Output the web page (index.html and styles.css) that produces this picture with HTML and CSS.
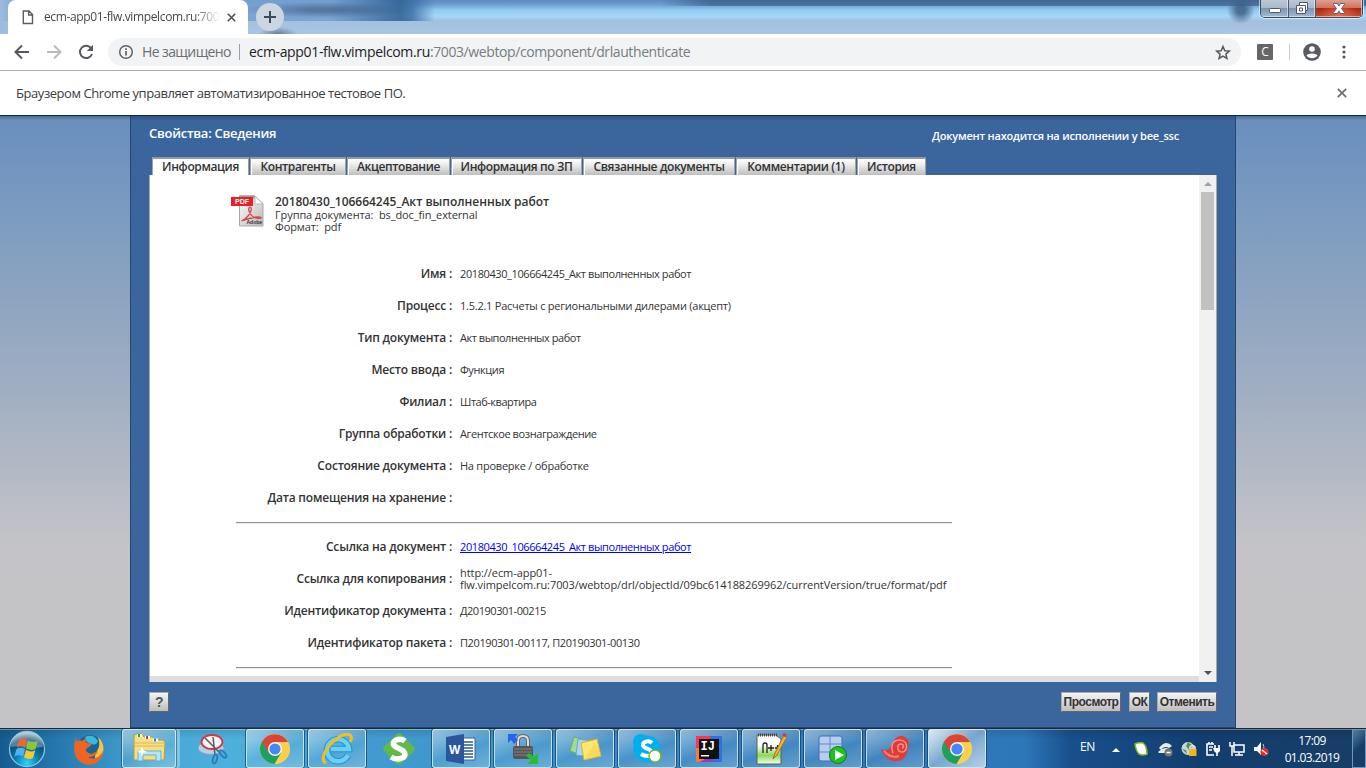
FILE: index.html
```html
<!DOCTYPE html>
<html lang="ru">
<head>
<meta charset="utf-8">
<title>Свойства: Сведения</title>
<link rel="stylesheet" href="styles.css">
</head>
<body>
<svg class="defs" width="0" height="0">
  <symbol id="chrome" viewBox="0 0 30 30">
    <circle cx="15" cy="15" r="15" fill="#fdd04c"/>
    <path d="M15 15 2 7.5A15 15 0 0 0 14.5 30L21 18.5z" fill="#1fa15d"/>
    <path d="M15 15 2 7.5A15 15 0 0 1 28 8H15z" fill="#db4437"/>
    <path d="M2 7.5 8.5 18.5 10 10z" fill="#db4437"/>
    <path d="M21.5 18.5 14.5 30 10 20z" fill="#1fa15d"/>
    <path d="M28 8.2H15L21.5 18.5 14.8 30A15 15 0 0 0 28 8.2z" fill="#fdd04c"/>
    <circle cx="15" cy="15" r="7" fill="#f6f6f6"/><circle cx="15" cy="15" r="5.6" fill="#4688f1"/>
  </symbol>
</svg>

<div class="titlebar">
  <div class="tab">
    <svg width="12" height="15" viewBox="0 0 12 15"><path d="M1.3 1H7l3.5 3.6V13.500H1.3zM6.600 1v4h4" fill="none" stroke="#5a5e63" stroke-width="1.4"/></svg>
    <span class="tab-name">ecm-app01-flw.vimpelcom.ru:700</span>
    <svg class="tab-x" width="9" height="9" viewBox="0 0 9 9"><path d="M.8.8l7.400 7.400M8.200.8.8 8.200" stroke="#4c5055" stroke-width="1.6"/></svg>
  </div>
  <div class="newtab"><svg width="12" height="12" viewBox="0 0 12 12"><path d="M6 0v12M0 6h12" stroke="#42484f" stroke-width="2"/></svg></div>
  <div class="winbtns">
    <div class="wb"><svg width="12" height="5" viewBox="0 0 12 5"><rect x=".5" y=".5" width="11" height="4" rx="1" fill="#fff" stroke="#4d566b"/></svg></div>
    <div class="wb mid"><svg width="12" height="12" viewBox="0 0 12 12"><path d="M3.500.5h8v8h-2v3h-9v-8h3z" fill="#fff" stroke="#4d566b"/><path d="M3.500 3.500h6v5M3.500 6h3v3h-3z" fill="none" stroke="#4d566b"/></svg></div>
    <div class="wb close"><svg width="12" height="11" viewBox="0 0 12 11"><path d="M.5.5h4L6 3 7.500.5h4v1L8.500 5.500l3 4v1h-4L6 8 4.500 10.500h-4v-1l3-4-3-4z" fill="#fff" stroke="#54536a" stroke-width=".9"/></svg></div>
  </div>
</div>

<div class="toolbar">
  <svg class="t-back" width="16" height="16" viewBox="0 0 16 16"><path d="M15 8H2M8 1.500 1.500 8 8 14.500" fill="none" stroke="#55595e" stroke-width="2"/></svg>
  <svg class="t-fwd" width="16" height="16" viewBox="0 0 16 16"><path d="M1 8h13M8 1.500 14.500 8 8 14.500" fill="none" stroke="#b9bbbd" stroke-width="2"/></svg>
  <svg class="t-rel" width="16" height="16" viewBox="0 0 16 16"><path d="M13.300 4.400A6.200 6.200 0 1 0 14 10" fill="none" stroke="#55595e" stroke-width="2"/><path d="M15 .8V7H8.800z" fill="#55595e"/></svg>
  <div class="omni">
    <svg width="16" height="16" viewBox="0 0 16 16"><circle cx="8" cy="8" r="6.300" fill="none" stroke="#5f6368" stroke-width="1.500"/><path d="M8 7v4.500M8 4.300v1.700" stroke="#5f6368" stroke-width="1.700"/></svg>
    <span class="insecure">Не защищено</span><i class="bar"></i>
    <span class="url"><b>ecm-app01-flw.vimpelcom.ru</b>:7003/webtop/component/drlauthenticate</span>
    <svg class="star" width="16" height="15" viewBox="0 0 16 15"><path d="M8 1.500 9.800 5.700l4.500.4-3.400 3 1 4.400L8 11.200l-3.900 2.300 1-4.400-3.400-3 4.500-.4z" fill="none" stroke="#55595e" stroke-width="1.500"/></svg>
  </div>
  <span class="ext">C</span><i class="sep"></i>
  <svg class="user" width="18" height="18" viewBox="0 0 18 18"><circle cx="9" cy="9" r="8.800" fill="#585c61"/><circle cx="9" cy="6" r="2.800" fill="#fff"/><path d="M3.500 12.500C4.500 9.800 13.500 9.800 14.500 12.500 12 16 6 16 3.500 12.500z" fill="#fff"/></svg>
  <svg class="dots" width="4" height="14" viewBox="0 0 4 14"><g fill="#55595e"><circle cx="2" cy="2" r="1.600"/><circle cx="2" cy="7" r="1.600"/><circle cx="2" cy="12" r="1.600"/></g></svg>
</div>

<div class="infobar"><span>Браузером Chrome управляет автоматизированное тестовое ПО.</span>
  <svg width="10" height="10" viewBox="0 0 10 10"><path d="M.8.8l8.400 8.400M9.200.8.8 9.200" stroke="#6d7176" stroke-width="1.800"/></svg></div>

<main class="page">
  <section class="dialog">
    <header class="head"><h1>Свойства: Сведения</h1><p>Документ находится на исполнении у bee_ssc</p></header>
    <nav class="tabs">
      <span class="t1 on">Информация</span><span class="t2">Контрагенты</span><span class="t3">Акцептование</span><span class="t4">Информация по ЗП</span><span class="t5">Связанные документы</span><span class="t6">Комментарии (1)</span><span class="t7">История</span>
    </nav>
    <div class="frame">
      <div class="content">
        <div class="doc">
          <svg width="33" height="32" viewBox="0 0 33 32">
            <defs><linearGradient id="pg" x2="1" y2="1"><stop stop-color="#fff"/><stop offset="1" stop-color="#b8b8b8"/></linearGradient></defs>
            <path d="M8.500 1H24l8 7.500V31H8.500z" fill="url(#pg)" stroke="#aaa"/><path d="M8 .5h16v3H8z" fill="#999"/><path d="M24 1v8h8z" fill="#fff" stroke="#bbb"/>
            <path d="M10.500 26c5-2 11-9 9.500-13-1-2-3 0-2 3 2 6 7 8 12 7 1-2-10-1-19.500 3z" fill="none" stroke="#d3474d" stroke-width="1.300"/>
            <rect y="2" width="22" height="9" fill="#ee1c24"/><text x="4" y="9.300" class="pdf-t">PDF</text><text x="15.500" y="28.500" class="adobe-t">Adobe</text>
          </svg>
          <div class="doc-text"><h2>20180430_106664245_Акт выполненных работ</h2><p>Группа документа:&nbsp; bs_doc_fin_external</p><p>Формат:&nbsp; pdf</p></div>
        </div>
        <dl class="rows">
          <dt>Имя :</dt><dd>20180430_106664245_Акт выполненных работ</dd>
          <dt>Процесс :</dt><dd class="wide">1.5.2.1 Расчеты с региональными дилерами (акцепт)</dd>
          <dt>Тип документа :</dt><dd class="tight">Акт выполненных работ</dd>
          <dt>Место ввода :</dt><dd>Функция</dd>
          <dt>Филиал :</dt><dd class="tight">Штаб-квартира</dd>
          <dt>Группа обработки :</dt><dd>Агентское вознаграждение</dd>
          <dt>Состояние документа :</dt><dd class="wide">На проверке / обработке</dd>
          <dt>Дата помещения на хранение :</dt><dd></dd>
        </dl>
        <div class="rule"></div>
        <dl class="rows">
          <dt>Ссылка на документ :</dt><dd><a href="#">20180430_106664245_Акт выполненных работ</a></dd>
          <dt>Ссылка для копирования :</dt><dd class="long">http://ecm-app01-<br>flw.vimpelcom.ru:7003/webtop/drl/objectId/09bc614188269962/currentVersion/true/format/pdf</dd>
          <dt>Идентификатор документа :</dt><dd class="tight">Д20190301-00215</dd>
          <dt>Идентификатор пакета :</dt><dd>П20190301-00117, П20190301-00130</dd>
        </dl>
        <div class="rule"></div>
      </div>
      <div class="scroll"><i class="up"></i><i class="thumb"></i><i class="down"></i></div>
    </div>
    <footer class="foot"><button class="help">?</button><button class="b1">Просмотр</button><button class="b2">ОК</button><button class="b3">Отменить</button></footer>
  </section>
</main>

<div class="taskbar">
  <div class="start"><svg width="40" height="38" viewBox="0 0 40 38">
    <defs><radialGradient id="orb" cy=".9" r=".9"><stop stop-color="#25d8ff"/><stop offset=".4" stop-color="#0879ac"/><stop offset=".75" stop-color="#0d466f"/><stop offset="1" stop-color="#b4d1e2"/></radialGradient></defs>
    <circle cx="20" cy="19" r="17.500" fill="url(#orb)" stroke="#8fc0d8" stroke-width="1.300"/><path d="M4 17C3-3 37-3 36 17c-10 2-20-3-32 0z" fill="#fff" opacity=".3"/>
    <path d="M12 10q5-3 8 0l-2 8q-4-3-8-.5z" fill="#f1662b"/><path d="M21 10.500q5 3 10 0l-2.500 8.500q-4 2-9.500-.5z" fill="#8cc63d"/><path d="M9.500 19q4-2.500 8.500 0l-2 7.500q-4-2.500-8.500 0z" fill="#4eb3ee"/><path d="M19 20q5 2.800 9.300.3L26 28q-4 2-9-.5z" fill="#fcc72c"/></svg></div>
  <div class="item"><svg width="32" height="32" viewBox="0 0 32 32"><circle cx="17" cy="15" r="13" fill="#17649f"/><path d="M12 4q8-4 13 4-2 5-6 3-6 0-7-7z" fill="#3eb5dd"/><path d="M25 4c8 7 7 19-1 24q-4-4 0-10 4-6 1-14z" fill="#f8c63c"/><path d="M3 5 4 9Q6 6 9 8l4-3q-1 4 1 5l5 1-3 3q-5 2-2 5c5 4 8 0 11-1-2 6-8 6-10 6 7 4 13-1 15-7 0 17-20 19-27 7Q-1 14 3 5z" fill="#ec6623"/></svg></div>
  <div class="item box stack"><svg width="34" height="32" viewBox="0 0 34 32"><path d="M2 4q0-3 3-3h5l2 3h9l2 3h7q3 0 3 3l-1 17H2z" fill="#f5df83" stroke="#bc9a42"/><path d="M2 10h31M2 13h31" stroke="#d9b957"/><path d="M5 2.500h5M13 4.500h5M21 7h5" stroke="#fff" stroke-width="3"/><path d="M6 2.500h2" stroke="#19b230" stroke-width="3"/><path d="M14 4.500h2" stroke="#d73a34" stroke-width="3"/><path d="M22 7h2" stroke="#2980d4" stroke-width="3"/><path d="M6 28V18h23v10h-5v-6H11v6z" fill="#b5e4f4" stroke="#5cb3d8"/><path d="m10 13 1 4 4 2-4 1-1 4-1-4-4-1 4-2z" fill="#fff"/></svg></div>
  <div class="item"><svg width="32" height="32" viewBox="0 0 32 32"><ellipse cx="14" cy="15" rx="13" ry="6.500" fill="#b5d2e2" stroke="#78a7c9"/><ellipse cx="15" cy="9" rx="10.500" ry="7" fill="#f6f4f4" stroke="#da3440" stroke-width="1.800"/><path d="m8 5 15 15M16 4l2 18" stroke="#575b61" stroke-width="1.500"/><ellipse cx="18" cy="26" rx="2" ry="4.500" fill="none" stroke="#257fbd" stroke-width="2" transform="rotate(15 18 26)"/><ellipse cx="26" cy="21" rx="2" ry="4.500" fill="none" stroke="#257fbd" stroke-width="2" transform="rotate(-42 26 21)"/></svg></div>
  <div class="item box"><svg width="30" height="30"><use href="#chrome"/></svg></div>
  <div class="item box"><svg width="34" height="34" viewBox="0 0 34 34"><path d="M28 23A11 11 0 1 1 29 17H11" fill="none" stroke="#1f93cf" stroke-width="6.500"/><path d="M28 23A11 11 0 1 1 29 17H11" fill="none" stroke="#69d1f7" stroke-width="4.500"/><path d="M6 31C-5 26 20-3 30 3q3 2 0 7" fill="none" stroke="#f4bd20" stroke-width="3"/></svg></div>
  <div class="item"><svg width="32" height="32" viewBox="0 0 32 32"><path d="M16 0q2 0 4 3l10 10q4 3 0 6L20 29q-4 5-8 0L2 19q-4-3 0-6L12 3q2-3 4-3z" fill="#62b946"/><path d="M22 8Q18 5 13 7c-6 4-1 7 4 9s7 7 2 9-8 1-11-1" fill="none" stroke="#fff" stroke-width="5.500"/></svg></div>
  <div class="item box"><svg width="30" height="30" viewBox="0 0 30 30"><path d="M15 4h14v22H15z" fill="#fff" stroke="#3763a4"/><path d="M18 8h9M18 11h9M18 14h9M18 17h9M18 20h9M18 23h9" stroke="#2b579a" stroke-width="1.500"/><path d="M0 3 18 0v30L0 27z" fill="#2b579a"/><text x="3" y="20" class="word-t">W</text></svg></div>
  <div class="item box"><svg width="32" height="32" viewBox="0 0 32 32"><path d="M11 14V8q0-5 5-5t5 5v6" fill="none" stroke="#666" stroke-width="4"/><path d="M11 14V8q0-5 5-5t5 5v6" fill="none" stroke="#ddd" stroke-width="2"/><rect x="6" y="13" width="20" height="13" rx="2" fill="#555"/><path d="M7 16h18M7 19h18M7 22h18" stroke="#838383"/><path d="M1 1h10L8 4l3 3-4 4-3-4-3 3z" fill="#2564ed"/><path d="M31 31H20l4-4-5-4 3-3 5 4 4-4z" fill="#28bd35"/></svg></div>
  <div class="item box"><svg width="32" height="30" viewBox="0 0 32 30"><path d="m5 3 15 4-5 15-14-5z" fill="#a3db91" stroke="#67b265"/><path d="m9 5 15 2-2 16-15-2z" fill="#a6d7f2" stroke="#65a9d5"/><path d="m12 9 16-4 4 17-17 4z" fill="#ffe66d" stroke="#e3af2e"/><path d="m15 26 17-4-6-13z" fill="#f5cd4c" opacity=".5"/></svg></div>
  <div class="item box"><svg width="32" height="32" viewBox="0 0 32 32"><circle cx="10" cy="9" r="8" fill="#00aff0"/><circle cx="16" cy="16" r="13.500" fill="#00aff0"/><circle cx="23" cy="23" r="7" fill="#00aff0"/><path d="M21 10q-3-3-7-1c-5 3 0 6 3 7 5 2 5 6 0 7q-4 0-7-2" fill="none" stroke="#fff" stroke-width="4"/><circle cx="24" cy="23" r="6" fill="#fff" stroke="#73b82c" stroke-width="1.500"/></svg></div>
  <div class="item box"><svg width="26" height="26" viewBox="0 0 26 26"><path d="M0 0h26v26H0z" fill="#326fe1"/><path d="M0 0h15L7 14 0 13z" fill="#fe315d"/><path d="M0 12h8v14H0z" fill="#f97a31"/><path d="m3 26 9-4 7 4z" fill="#9e3cae"/><path d="M3 3h20v20H3z" fill="#111"/><text x="4.500" y="14" class="ij-t">IJ</text><path d="M5 19h8v1.500H5z" fill="#fff"/></svg></div>
  <div class="item box"><svg width="30" height="32" viewBox="0 0 30 32"><defs><linearGradient id="np" x2="0" y2="1"><stop offset=".35" stop-color="#fff"/><stop offset=".7" stop-color="#8ed755"/><stop offset="1" stop-color="#f5ffef"/></linearGradient></defs><path d="M1 2h19l5 4v25H1z" fill="url(#np)" stroke="#536450"/><path d="M2 2h19" stroke="#444" stroke-width="3" stroke-dasharray="1 1"/><path d="M7 20v-8q0-2 2-2t2 2v8M12 15h6M15 12v6M19 15h5M21.500 12v6" fill="none" stroke="#222" stroke-width="1.300"/><path d="m17 26 2-6L28 2l3 2-10 18z" fill="#f0b43b" stroke="#a46c22"/><path d="m27 1 3 2" stroke="#b44" stroke-width="3"/></svg></div>
  <div class="item box"><svg width="30" height="30" viewBox="0 0 30 30"><rect x="1" y="2" width="23" height="25" rx="2" fill="#b6cdf2" stroke="#446dac"/><path d="M1 10h23M1 18h23M12 2v25" stroke="#6089c4"/><circle cx="20" cy="21" r="8.500" fill="#1bc61c" stroke="#137525"/><path d="m17 16 9 5-9 5z" fill="#fff"/></svg></div>
  <div class="item box"><svg width="30" height="30" viewBox="0 0 30 30"><path d="M1 15q7 4 11-4c3-11 14-12 17-3l-2 11C23 31 6 30 1 15z" fill="#df3c36"/><path d="M13 19q-4-12 6-13c10 0 9 12 3 12-6-1-5-8-1-8 3 0 3 4 1 4" fill="none" stroke="#ff9288" stroke-width="1.500"/><path d="M4 17q7 8 15 5" fill="none" stroke="#ff8278" stroke-width="2"/></svg></div>
  <div class="item box active"><svg width="30" height="30"><use href="#chrome"/></svg></div>
  <div class="tray">
    <span class="lang">EN</span>
    <svg class="arr" width="8" height="4" viewBox="0 0 8 4"><path d="m0 4 4-4 4 4z" fill="#fff"/></svg>
    <svg width="16" height="16" viewBox="0 0 16 16"><path d="M2 3q4-2 8-1 4 3 4 11-4 2-8 0-3-3-4-10z" fill="#fff" stroke="#87ba21" stroke-width="1.500"/></svg>
    <svg width="16" height="16" viewBox="0 0 16 16"><path d="M2 7q7-9 13-2l-3 2Q7 4 4 9zM1 11q7-6 11-3v4H2z" fill="#e9e9e9"/><circle cx="11.500" cy="11.500" r="4" fill="#777"/><path d="M9.500 11.500h4" stroke="#fff" stroke-width="1.500"/></svg>
    <svg width="16" height="16" viewBox="0 0 16 16"><circle cx="7" cy="7.500" r="6.500" fill="#c9d8d5"/><path d="m7 1 5 4-4 4-3-4zM1 8l4 1 1 4z" fill="#55915c"/><path d="M9 9V6q2.500-3 5 0v3" fill="none" stroke="#eee" stroke-width="1.500"/><rect x="8" y="8" width="7.500" height="7" fill="#f2b61c"/></svg>
    <svg width="16" height="16" viewBox="0 0 16 16"><path d="M9 14H2V3h7M4 1v2M7 1v2M4 6h4M4 9h3" fill="none" stroke="#fff" stroke-width="1.600"/><path d="M10 4v4M14 4v4M12 11v4" stroke="#fff" stroke-width="1.600"/><path d="M8 7h7v3q-3 4-6 0z" fill="#fff"/></svg>
    <svg width="16" height="16" viewBox="0 0 16 16"><path d="M5 4h10v7H5zM10 11v3M6 14h8M3 5v10M1 1v4h4V1" fill="none" stroke="#fff" stroke-width="1.500"/></svg>
    <svg width="16" height="16" viewBox="0 0 16 16"><path d="M1 6h3l4-5v13l-4-4H1z" fill="#fff"/><path d="M10 3q2 3 0 6" fill="none" stroke="#b6c7d6"/><circle cx="11.500" cy="11" r="4" fill="#e32d29"/><path d="m9 9 5 4" stroke="#fff" stroke-width="1.400"/></svg>
    <div class="clock"><span>17:09</span><span>01.03.2019</span></div>
    <div class="peek"></div>
  </div>
</div>
</body>
</html>
```
FILE: styles.css
```css
* { box-sizing: border-box; }
body { margin: 0; width: 1366px; height: 768px; overflow: hidden; display: flex; flex-direction: column; font-family: "Open Sans", "Noto Sans", sans-serif; color: #333; background: #fff; }
svg { display: block; flex: none; overflow: visible; }
.defs { position: absolute; }
h1, h2, p, dl, dd { margin: 0; }

.titlebar { height: 34px; flex: none; display: flex; align-items: flex-start; background: radial-gradient(ellipse 14px 14px at 1241px 10px, rgba(62,94,132,.85) 30%, transparent), radial-gradient(ellipse 85px 8px at 325px 10px, rgba(50,75,110,.5) 20%, transparent), radial-gradient(ellipse 20px 7px at 278px 34px, rgba(65,75,95,.6), transparent), linear-gradient(90deg, #9ebbdc 0, transparent 25px), linear-gradient(90deg, rgba(118,160,208,.9) 330px, rgba(50,100,150,.9) 400px, rgba(58,110,165,.85) 412px, transparent 435px) 0 0 / 100% 21px no-repeat, linear-gradient(90deg, transparent 660px, rgba(30,60,95,.45) 710px) 0 0 / 100% 6px no-repeat, linear-gradient(#5e8abc 0, #689bd0 4px, #91cbef 10px, #a5d7fa 16px, #a2c1df 21px, #abc6e5 34px); }
.tab { margin-left: 8px; width: 240px; height: 34px; background: #fff; border-radius: 8px 8px 0 0; display: flex; align-items: center; padding-left: 14px; }
.tab-name { margin-left: 10px; width: 178px; white-space: nowrap; font-size: 12px; letter-spacing: -.37px; line-height: 20px; color: #44484d; -webkit-mask-image: linear-gradient(90deg, #000 150px, transparent 176px); }
.tab-x { margin-left: 5px; }
.newtab { width: 28px; height: 28px; margin: 3px 0 0 8px; border-radius: 50%; background: #ccd6e2; display: flex; align-items: center; justify-content: center; }
.winbtns { margin-left: auto; margin-right: 3px; width: 103px; height: 18px; border: 1px solid #3a4a63; border-top: 0; border-radius: 0 0 5px 5px; display: flex; overflow: hidden; box-shadow: 0 0 0 1px rgba(255,255,255,.6); }
.wb { width: 28px; background: linear-gradient(#bcc8d8 0, #a8b7ca 8px, #7d93ae 8px, #a1b9d3); display: flex; justify-content: center; padding-top: 8px; border-right: 1px solid #4c5c76; box-shadow: inset -1px -1px rgba(255,255,255,.5); }
.mid { width: 27px; padding-top: 2px; }
.close { flex: 1; padding-top: 3px; border: 0; background: radial-gradient(ellipse at 50% 90%, #e66a42, transparent 60%), linear-gradient(#dda092 0, #cd7260 8px, #aa2511 8px, #c84d30); }

.toolbar { height: 37px; flex: none; border-bottom: 1px solid #adadad; display: flex; align-items: center; background: #fff; }
.t-back { margin-left: 14px; } .t-fwd { margin-left: 16px; } .t-rel { margin-left: 16px; }
.omni { margin-left: 14px; width: 1133px; height: 28px; border-radius: 14px; background: #f1f3f4; display: flex; align-items: center; padding: 0 10px; font-size: 14px; line-height: 20px; white-space: nowrap; }
.insecure { margin-left: 8px; color: #6b6f74; letter-spacing: -.6px; width: 89px; }
.bar { width: 1px; height: 16px; background: #9aa0a6; margin: 0 9px 0 8px; }
.url { color: #777c81; letter-spacing: -.4px; } .url b { font-weight: 400; color: #202124; letter-spacing: -.34px; }
.star { margin-left: auto; }
.ext { width: 16px; height: 16px; margin-left: 16px; border-radius: 1px; background: #666; color: #fff; font: 12px/16px "Open Sans", sans-serif; text-align: center; }
.sep { width: 1px; height: 16px; margin-left: 16px; background: #ccc; }
.user { margin-left: 13px; } .dots { margin-left: 21px; }

.infobar { height: 44px; flex: none; padding: 0 19px 0 16px; display: flex; align-items: center; justify-content: space-between; font-size: 13px; letter-spacing: -.44px; color: #3c3c3c; background: #fff; }

.page { height: 613px; flex: none; border-top: 1px solid #1c2734; background: linear-gradient(rgba(0,0,0,.25), transparent 4px), linear-gradient(#698fbe 0, #7f9dc0 115px, #a2afc2 280px, #c4c4c8 430px, #c4c4c6); display: flex; justify-content: center; }
.dialog { width: 1106px; height: 612px; background: linear-gradient(rgba(0,0,30,.2), transparent 5px), #3b669d; border: 1px solid #24466f; border-top: 0; padding: 0 18px; display: flex; flex-direction: column; }
.head { height: 41px; flex: none; display: flex; justify-content: space-between; color: #fff; white-space: nowrap; }
.head h1 { font-size: 13px; font-weight: 600; line-height: 20px; letter-spacing: -.27px; margin-top: 7px; }
.head p { font-size: 11px; font-weight: 600; line-height: 18px; letter-spacing: -.2px; margin: 11px 38px 0 0; }
.tabs { height: 18px; flex: none; display: flex; padding-left: 3px; }
.tabs span { height: 18px; border: 1px solid #9fa1ab; border-top: 2px solid #9497a4; border-bottom: 0; background: linear-gradient(#fff, #f0f0f0 30%, #bebebe); font-size: 12px; font-weight: 600; line-height: 15px; letter-spacing: -.38px; text-align: center; white-space: nowrap; box-shadow: inset 1px 0 #fff; margin-right: 1px; }
.tabs .on { background: #fff; }
.t1 { width: 97px; } .t2 { width: 96px; } .t3 { width: 103px; } .t4 { width: 131px; } .t5 { width: 152px; } .t6 { width: 120px; } .t7 { width: 69px; }
.frame { height: 507px; flex: none; background: #fff; border-left: 1px solid #aaa; border-right: 1px solid #aaa; display: flex; }
.content { flex: 1; overflow: hidden; border-bottom: 6px solid #dedede; }
.doc { display: flex; padding: 20px 0 0 81px; height: 83px; }
.doc-text { margin-left: 11px; font-size: 11px; line-height: 12px; letter-spacing: -.1px; white-space: nowrap; }
.doc h2 { font-size: 12px; font-weight: 600; line-height: 14px; letter-spacing: -.02px; }
.rows { display: grid; grid-template-columns: 302px 1fr; column-gap: 8px; grid-auto-rows: 32px; align-items: center; white-space: nowrap; font-size: 11px; line-height: 12px; }
.rows dt { text-align: right; font-size: 12px; font-weight: 600; letter-spacing: -.2px; }
.rows dd { letter-spacing: -.4px; }
.rows .wide { letter-spacing: -.24px; }
.rows .tight { letter-spacing: -.47px; }
.rows .long { letter-spacing: -.07px; }
.rows a { color: #00f; }
.rule { width: 716px; height: 2px; margin: 8px 0 7px 86px; border-top: 1px solid #919191; border-bottom: 1px solid #eee; }
.rule:last-child { margin-top: 8px; }
.scroll { width: 17px; background: #f1f1f1; display: flex; flex-direction: column; align-items: center; }
.up { border: 4px solid transparent; border-bottom-color: #a0a0a0; border-top: 0; margin: 7px 0 6px; }
.thumb { width: 13px; height: 118px; background: #c1c1c1; }
.down { margin: auto 0 7px; border: 4px solid transparent; border-top-color: #505050; border-bottom: 0; }
.foot { height: 46px; display: flex; align-items: flex-start; padding-top: 10px; }
.foot button { height: 20px; padding: 0; border: 1px solid #aaa; border-right-color: #666; border-bottom-color: #666; background: linear-gradient(#f5f5f5, #bdbdbd); font: bold 12px/18px "Liberation Sans", Arial, sans-serif; letter-spacing: -.5px; color: #333; white-space: nowrap; }
.foot .help { width: 20px; margin-right: auto; font-size: 14px; color: #555; }
.foot .b1 { width: 60px; margin-right: 8px; } .foot .b2 { width: 21px; margin-right: 7px; } .foot .b3 { width: 60px; }

.taskbar { height: 40px; flex: none; border-top: 1px solid #1d2833; box-shadow: inset 0 1px rgba(255,255,255,.35); background: linear-gradient(rgba(0,0,0,.12), transparent 10px), linear-gradient(90deg, #155b90 0, #2d83b9 80px, #48a6d3 150px, #4eb0dd 230px, #429ccf 350px, #3e94cb 520px, #347fbd 750px, #2d77b9 1025px, #18508c 1070px, #123e6f 1200px, #173e66); display: flex; align-items: center; }
.start { width: 56px; padding-left: 7px; }
.item { width: 58px; height: 39px; margin-left: 4px; display: flex; align-items: center; justify-content: center; border-radius: 3px; flex: none; }
.box { border: 1px solid rgba(225,243,252,.75); background: linear-gradient(160deg, rgba(255,255,255,.48), rgba(255,255,255,.08) 55%, rgba(255,255,255,.25)); box-shadow: 0 0 0 1px rgba(15,56,91,.65); }
.stack { width: 54px; margin-right: 4px; box-shadow: 0 0 0 1px rgba(15,56,91,.5), 4px 0 rgba(170,215,235,.6); }
.active { background: linear-gradient(145deg, rgba(255,255,255,.85), rgba(255,255,255,.35) 50%, rgba(255,255,255,.65)); }
.tray { margin-left: auto; height: 39px; display: flex; align-items: center; gap: 8px; color: #fff; }
.lang { font-size: 12px; line-height: 16px; letter-spacing: -.3px; width: 16px; margin-right: 8px; margin-top: -4px; }
.arr { margin: 2px 5px 0 0; }
.clock { width: 62px; margin-left: 4px; margin-right: 1px; display: flex; flex-direction: column; align-items: center; font-size: 12px; line-height: 17px; white-space: nowrap; letter-spacing: -.65px; }
.peek { width: 14px; height: 39px; border: 1px solid #6f97b8; background: linear-gradient(135deg, #547ea2, #173e68 50%); }
.pdf-t { font: bold 7px "Liberation Sans", sans-serif; fill: #fff; }
.adobe-t { font: bold 5px "Liberation Sans", sans-serif; fill: #333; }
.word-t { font: bold 12px "Liberation Sans", sans-serif; fill: #fff; }
.ij-t { font: bold 12px "Liberation Mono", monospace; fill: #fff; }
```
